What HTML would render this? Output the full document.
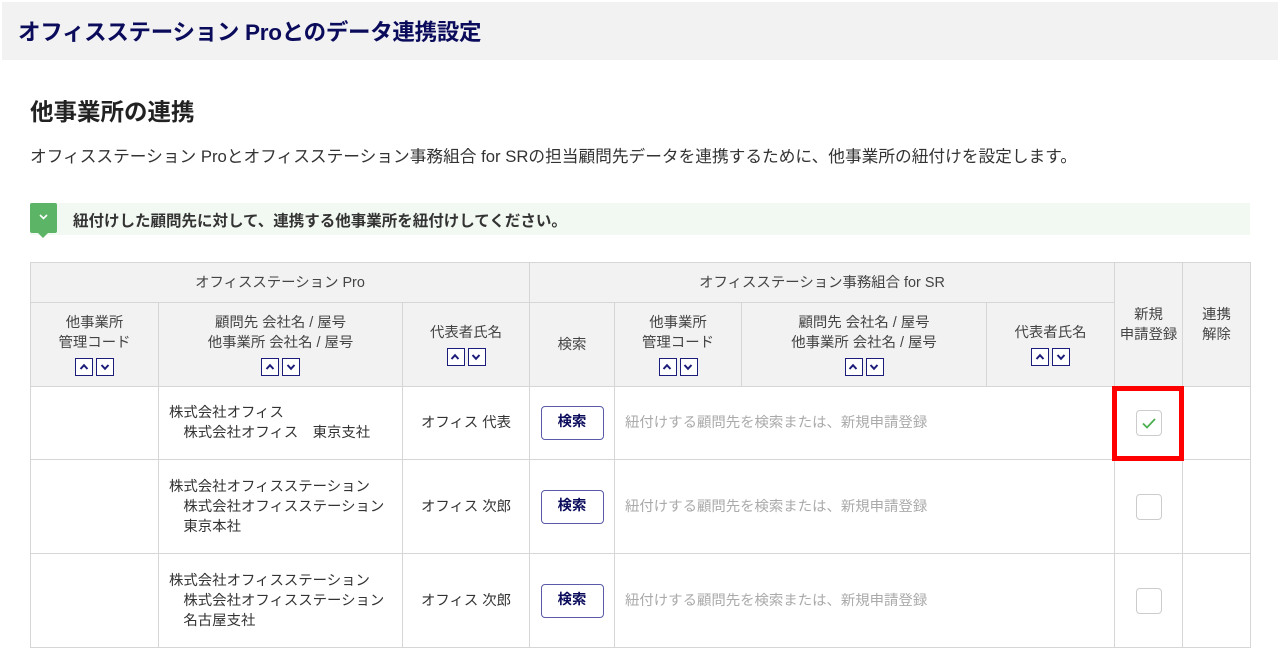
<!DOCTYPE html>
<html><head><meta charset="utf-8"><style>
*{margin:0;padding:0;box-sizing:border-box}
body{width:1280px;height:659px;background:#fff;font-family:"Liberation Sans","Noto Sans CJK JP",sans-serif;color:#333;position:relative;overflow:hidden}
.tb{position:absolute;left:2px;top:2px;width:1276px;height:58px;background:#f2f2f2}
.tb h1{position:absolute;left:16px;top:13px;font-size:22.5px;color:#0b0b5c;font-weight:bold;letter-spacing:-0.3px}
h2{position:absolute;left:30px;top:93px;font-size:23.5px;font-weight:bold;color:#222}
.desc{position:absolute;left:30px;top:143px;font-size:16.7px;color:#333}
.note{position:absolute;left:30px;top:203px;width:1220px;height:32px;background:#f2f8f2}
.note .ic{position:absolute;left:0;top:0;width:27px;height:30px;background:#5cb466;border-radius:2px}
.note .ic:after{content:"";position:absolute;left:8px;top:30px;border-left:5px solid transparent;border-right:5px solid transparent;border-top:5px solid #5cb466}
.note .ic svg{position:absolute;left:9px;top:11px}
.note span{position:absolute;left:43px;top:6px;font-size:15.5px;font-weight:bold;color:#333}
table{position:absolute;left:30px;top:262px;border-collapse:collapse;table-layout:fixed;font-size:14.4px}
td{border:1px solid #d6d6d6;text-align:center;vertical-align:middle;line-height:20px;color:#333}
.h{background:#f2f2f2;color:#444}
.s{display:flex;justify-content:center;gap:3px;margin-top:5px}
.s i{width:18px;height:18px;border:1.5px solid #1c1c7a;display:block;position:relative;background:#fff}
.s i svg{position:absolute;left:2.5px;top:2.5px}
.l{text-align:left;padding-left:10px}
.btn{display:inline-block;width:63px;height:34px;border:1.5px solid #5a5aa8;border-radius:4px;font-weight:bold;color:#0b0b5c;line-height:31px;text-align:center}
.ph{color:#aaa;text-align:left;padding-left:10px}
.cb{display:inline-block;width:26px;height:26px;border:1px solid #ccc;border-radius:4px;position:relative;vertical-align:middle}
.red{position:absolute;left:1112px;top:386px;width:72px;height:75px;border:5px solid #f00}
</style></head><body>
<div class="tb"><h1>オフィスステーション Proとのデータ連携設定</h1></div>
<h2>他事業所の連携</h2>
<div class="desc">オフィスステーション Proとオフィスステーション事務組合 for SRの担当顧問先データを連携するために、他事業所の紐付けを設定します。</div>
<div class="note"><div class="ic"><svg width="9" height="6" viewBox="0 0 9 6"><path d="M1 1l3.5 3.5L8 1" stroke="#fff" stroke-width="1.6" fill="none"/></svg></div><span>紐付けした顧問先に対して、連携する他事業所を紐付けしてください。</span></div>
<table>
<colgroup><col style="width:128px"><col style="width:244px"><col style="width:127px"><col style="width:85px"><col style="width:127px"><col style="width:245px"><col style="width:128px"><col style="width:68px"><col style="width:68px"></colgroup>
<tr style="height:40px"><td class="h" colspan="3">オフィスステーション Pro</td><td class="h" colspan="4">オフィスステーション事務組合 for SR</td><td class="h" rowspan="2" style="vertical-align:top;padding-top:42px">新規<br>申請登録</td><td class="h" rowspan="2" style="vertical-align:top;padding-top:42px">連携<br>解除</td></tr>
<tr style="height:84px">
<td class="h">他事業所<br>管理コード<div class="s"><i><svg width="10" height="10"><path d="M1.5 7L5 3.2 8.5 7" stroke="#1c1c7a" stroke-width="2" fill="none"/></svg></i><i><svg width="10" height="10"><path d="M1.5 3L5 6.8 8.5 3" stroke="#1c1c7a" stroke-width="2" fill="none"/></svg></i></div></td>
<td class="h">顧問先 会社名 / 屋号<br>他事業所 会社名 / 屋号<div class="s"><i><svg width="10" height="10"><path d="M1.5 7L5 3.2 8.5 7" stroke="#1c1c7a" stroke-width="2" fill="none"/></svg></i><i><svg width="10" height="10"><path d="M1.5 3L5 6.8 8.5 3" stroke="#1c1c7a" stroke-width="2" fill="none"/></svg></i></div></td>
<td class="h">代表者氏名<div class="s"><i><svg width="10" height="10"><path d="M1.5 7L5 3.2 8.5 7" stroke="#1c1c7a" stroke-width="2" fill="none"/></svg></i><i><svg width="10" height="10"><path d="M1.5 3L5 6.8 8.5 3" stroke="#1c1c7a" stroke-width="2" fill="none"/></svg></i></div></td>
<td class="h">検索</td>
<td class="h">他事業所<br>管理コード<div class="s"><i><svg width="10" height="10"><path d="M1.5 7L5 3.2 8.5 7" stroke="#1c1c7a" stroke-width="2" fill="none"/></svg></i><i><svg width="10" height="10"><path d="M1.5 3L5 6.8 8.5 3" stroke="#1c1c7a" stroke-width="2" fill="none"/></svg></i></div></td>
<td class="h">顧問先 会社名 / 屋号<br>他事業所 会社名 / 屋号<div class="s"><i><svg width="10" height="10"><path d="M1.5 7L5 3.2 8.5 7" stroke="#1c1c7a" stroke-width="2" fill="none"/></svg></i><i><svg width="10" height="10"><path d="M1.5 3L5 6.8 8.5 3" stroke="#1c1c7a" stroke-width="2" fill="none"/></svg></i></div></td>
<td class="h">代表者氏名<div class="s"><i><svg width="10" height="10"><path d="M1.5 7L5 3.2 8.5 7" stroke="#1c1c7a" stroke-width="2" fill="none"/></svg></i><i><svg width="10" height="10"><path d="M1.5 3L5 6.8 8.5 3" stroke="#1c1c7a" stroke-width="2" fill="none"/></svg></i></div></td>
</tr>
<tr style="height:73px"><td></td><td class="l">株式会社オフィス<br>　株式会社オフィス　東京支社</td><td>オフィス 代表</td><td><span class="btn">検索</span></td><td colspan="3" class="ph">紐付けする顧問先を検索または、新規申請登録</td><td><span class="cb"><svg width="26" height="26" style="position:absolute;left:-1px;top:-1px"><path d="M7 13.5l4 4 8-8.5" stroke="#4caf50" stroke-width="1.8" fill="none"/></svg></span></td><td></td></tr>
<tr style="height:94px"><td></td><td class="l">株式会社オフィスステーション<br>　株式会社オフィスステーション<br>　東京本社</td><td>オフィス 次郎</td><td><span class="btn">検索</span></td><td colspan="3" class="ph">紐付けする顧問先を検索または、新規申請登録</td><td><span class="cb"></span></td><td></td></tr>
<tr style="height:94px"><td></td><td class="l">株式会社オフィスステーション<br>　株式会社オフィスステーション<br>　名古屋支社</td><td>オフィス 次郎</td><td><span class="btn">検索</span></td><td colspan="3" class="ph">紐付けする顧問先を検索または、新規申請登録</td><td><span class="cb"></span></td><td></td></tr>
</table>
<div class="red"></div>
</body></html>
